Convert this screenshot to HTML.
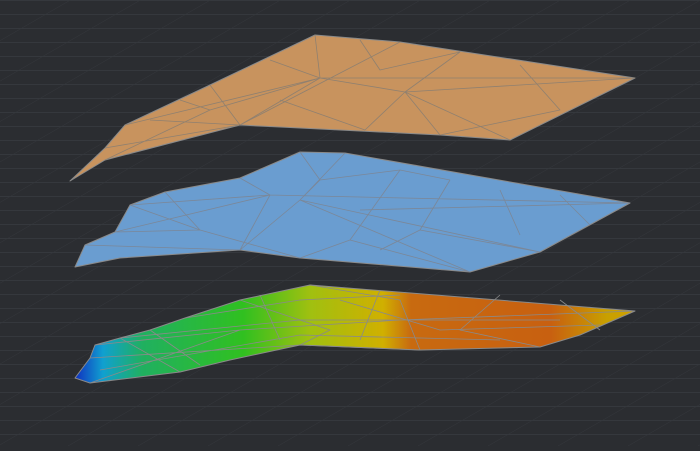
<!DOCTYPE html><html><head><style>html,body{margin:0;padding:0;background:#2b2d31;overflow:hidden}</style></head><body>
<svg width="700" height="446" viewBox="0 0 700 446" xmlns="http://www.w3.org/2000/svg">
<defs>
<pattern id="g" width="70" height="14" patternUnits="userSpaceOnUse" patternTransform="skewX(-60)">
<path d="M0 0.5H70" stroke="#35383d" stroke-width="1"/><path d="M0.5 0V14" stroke="#33363b" stroke-width="1"/>
</pattern>
<linearGradient id="b" x1="0" y1="0" x2="1" y2="0" gradientUnits="objectBoundingBox">
<stop offset="0" stop-color="#1030c0"/><stop offset="0.05" stop-color="#10a0d0"/><stop offset="0.12" stop-color="#20b060"/>
<stop offset="0.3" stop-color="#30c020"/><stop offset="0.42" stop-color="#a0c010"/><stop offset="0.55" stop-color="#d0b000"/>
<stop offset="0.6" stop-color="#c86a10"/><stop offset="0.85" stop-color="#c86010"/><stop offset="0.95" stop-color="#c8a000"/><stop offset="1" stop-color="#d0a000"/>
</linearGradient>
</defs>
<rect width="700" height="446" fill="#2b2d31"/>
<rect width="700" height="446" fill="url(#g)"/>
<g stroke="#8a8a8a" stroke-width="1" stroke-linejoin="round">
<polygon fill="#c8935e" points="70,181 105,148 125,125 210,85 315,35 400,42 635,78 510,140 440,135 240,125 105,160"/>
<g fill="none" stroke="#8f8070" stroke-width="0.8">
<path d="M105,148 L240,125 L400,42 M125,125 L320,78 L635,78 M210,85 L240,125 L320,78 L315,35 M320,78 L405,92 L440,135 M405,92 L635,78 M405,92 L365,130 M320,78 L210,110 L105,160 M460,52 L405,92 L510,140 M150,120 L240,125 M270,60 L320,78 M360,40 L380,70 L460,52 M520,65 L560,110 L440,135 M280,100 L365,130 M180,100 L210,110"/>
</g>
<polygon fill="#6a9dd0" points="75,267 85,245 115,232 130,205 165,192 240,178 300,152 345,153 630,203 540,252 470,272 300,258 240,250 120,258"/>
<g fill="none" stroke="#7b8798" stroke-width="0.8">
<path d="M85,245 L240,250 L300,200 L345,153 M115,232 L270,195 L630,203 M130,205 L270,195 L240,250 M300,200 L470,272 M300,200 L540,252 M165,192 L200,230 L115,232 M400,170 L350,240 L470,272 M450,180 L420,230 L540,252 M500,190 L520,235 M200,230 L300,258 M240,178 L270,195 M360,210 L630,203 M300,152 L320,180 L400,170 L450,180 M320,180 L300,200 M350,240 L300,258 M380,250 L420,230 M560,195 L590,225 M130,205 L200,230"/>
</g>
<polygon fill="url(#b)" points="75,378 90,358 95,345 120,338 150,330 185,318 240,300 310,285 635,311 580,335 540,347 420,350 300,345 230,360 180,372 90,383"/>
<g fill="none" stroke="#8a8a8a" stroke-width="0.8">
<path d="M90,358 L300,345 L420,350 M95,345 L240,330 L400,320 L635,311 M120,338 L300,320 L560,320 M185,318 L300,300 L400,295 M240,300 L330,330 L300,345 M310,285 L400,300 L420,350 M500,295 L460,330 L540,347 M90,383 L240,330 M150,330 L200,365 M380,290 L360,340 M560,300 L600,330 M120,338 L180,372 M100,370 L300,335 L500,340 M260,295 L280,340 M340,300 L440,330 L600,325"/>
</g>
</g>
</svg>
</body></html>
